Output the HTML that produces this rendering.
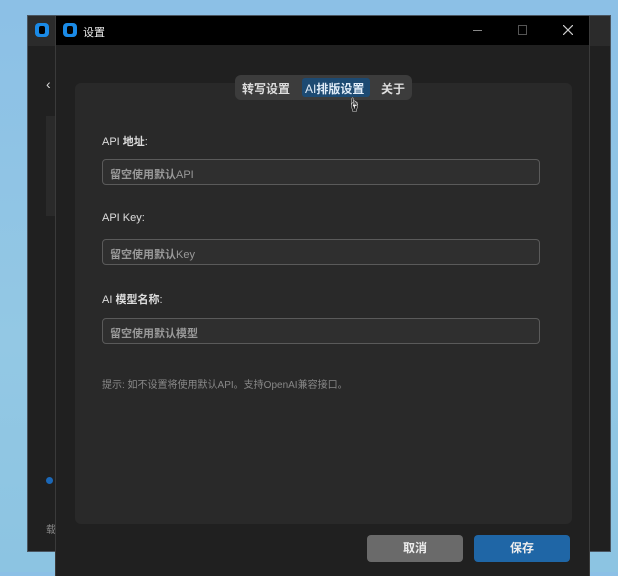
<!DOCTYPE html>
<html><head><meta charset="utf-8"><style>
*{margin:0;padding:0;box-sizing:border-box}
body{width:618px;height:572px;overflow:hidden;position:relative;background:linear-gradient(180deg,#8cc0e6 0%,#93c8e4 60%,#8cc4e2 100%);font-family:"Liberation Sans","Noto Sans CJK SC",sans-serif}
.bg{position:absolute;left:27px;top:15px;width:584px;height:537px;background:#202020;border:1px solid #4a5560}
.bgt{position:absolute;left:0;top:0;width:100%;height:30px;background:#2b2b2b}
.dlg{position:absolute;left:55px;top:16px;width:535px;height:560px;background:#202020;border-left:1px solid #3a3a3a;border-right:1px solid #3a3a3a}
.tb{position:absolute;left:0;top:0;width:100%;height:29px;background:#000}
.logo{position:absolute;width:14px;height:14px;border-radius:4px;background:#1a8ae6}
.logo::after{content:"";position:absolute;left:4px;top:3px;width:6px;height:8px;border-radius:2px;background:#000}
.panel{position:absolute;left:19px;top:67px;width:497px;height:441px;background:#292929;border-radius:6px}
.tabs{position:absolute;left:179px;top:59px;width:177px;height:25px;background:#3c3c3c;border-radius:6px;color:#ddd;font-size:12px;font-weight:bold}
.tabs span{position:absolute;top:5px}
.act{position:absolute;left:67px;top:3px;width:68px;height:19px;background:#1d4a72;border-radius:3px}
.lbl{position:absolute;left:46px;color:#ddd;font-size:11px}
.inp{position:absolute;left:46px;width:438px;height:26px;border:1px solid #5a5a5a;border-radius:4px;background:#2f2f2f;color:#999;font-size:11px;padding:6px 7px}
.btn{position:absolute;top:519px;width:96px;height:27px;border-radius:4px;color:#eee;font-size:12px;font-weight:bold;text-align:center;line-height:27px}
</style></head><body>
<div class="bg"><div class="bgt"></div><div class="logo" style="left:7px;top:7px"></div>
<div style="position:absolute;left:18px;top:60px;color:#ddd;font-size:14px">‹</div>
<div style="position:absolute;left:18px;top:100px;width:20px;height:100px;background:#2a2a2a"></div>
<div style="position:absolute;left:18px;top:461px;width:7px;height:7px;border-radius:50%;background:#1b68b8"></div>
<div style="position:absolute;left:18px;top:505px;color:#888;font-size:10px">载</div>
</div>
<div class="dlg">
<div class="tb"><div class="logo" style="left:7px;top:7px"></div>
<div style="position:absolute;left:27px;top:8px;color:#eee;font-size:11px">设置</div>
<div style="position:absolute;left:417px;top:14px;width:9px;height:1px;background:#888"></div>
<div style="position:absolute;left:462px;top:9px;width:9px;height:10px;border:1px solid #555"></div>
<svg style="position:absolute;left:507px;top:9px" width="10" height="10"><path d="M0 0L10 10M10 0L0 10" stroke="#ccc" stroke-width="1.2"/></svg>
</div>
<div class="panel"></div>
<div class="tabs"><div class="act"></div><span style="left:7px">转写设置</span><span style="left:70px;color:#e0ecf8;font-weight:normal">AI<b>排版设置</b></span><span style="left:146px">关于</span></div>
<div style="position:absolute;left:291px;top:79px;color:#fff;font-size:14px">☝</div>
<div class="lbl" style="top:117px">API <b>地址</b>:</div>
<div class="inp" style="top:143px"><b>留空使用默认</b>API</div>
<div class="lbl" style="top:196px">API Key:</div>
<div class="inp" style="top:223px"><b>留空使用默认</b>Key</div>
<div class="lbl" style="top:275px">AI <b>模型名称</b>:</div>
<div class="inp" style="top:302px"><b>留空使用默认模型</b></div>
<div style="position:absolute;left:46px;top:360px;color:#888;font-size:10px">提示: 如不设置将使用默认API。支持OpenAI兼容接口。</div>
<div class="btn" style="left:311px;background:#6a6a6a">取消</div>
<div class="btn" style="left:418px;background:#1f66a6">保存</div>
</div>
</body></html>
